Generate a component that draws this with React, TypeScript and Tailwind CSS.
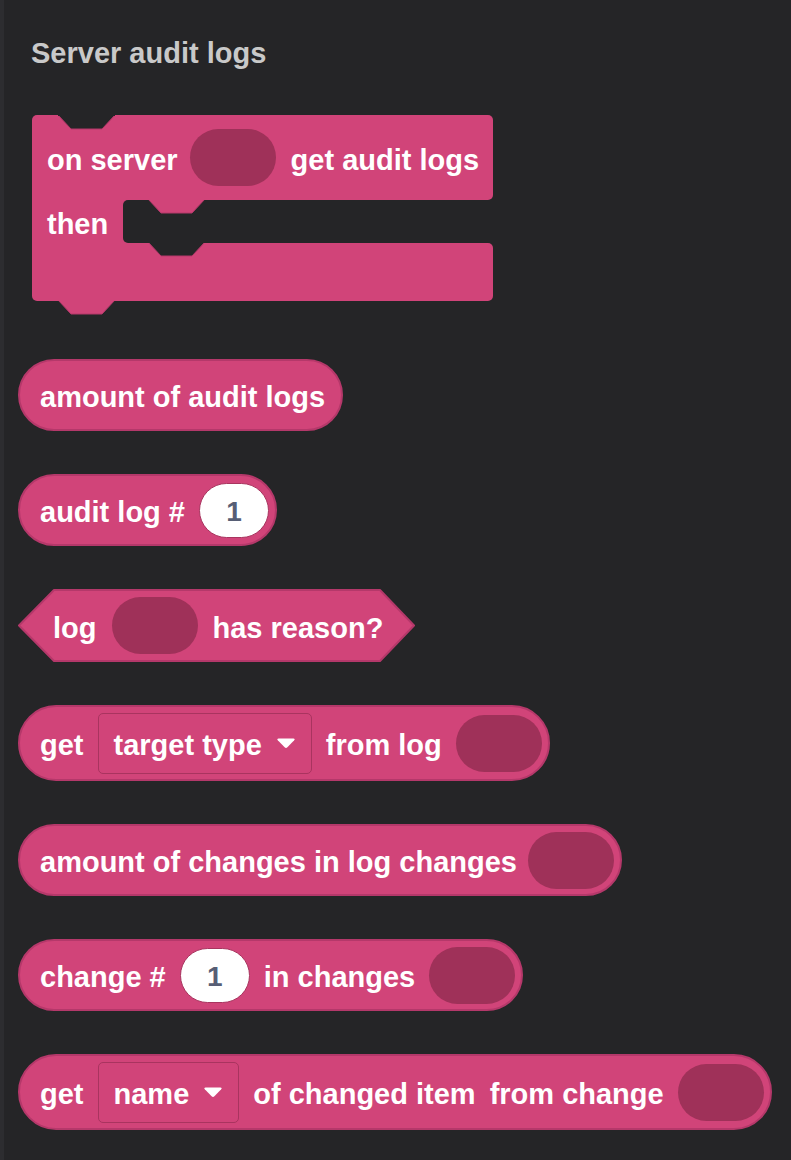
import type { ReactNode } from 'react'

const font = { fontFamily: '"Liberation Sans", Helvetica, Arial, sans-serif' }

// block text sits a few px below the box centre, as in the editor
function Label({ children }: { children: ReactNode }) {
  return <span className="pt-[6px] whitespace-nowrap">{children}</span>
}

function Slot() {
  return <div className="h-[57px] w-[86px] shrink-0 rounded-full bg-[#9f3159]" />
}

function NumberField({ value }: { value: string }) {
  return (
    <div className="flex h-[55px] w-[70px] shrink-0 items-center justify-center rounded-full border border-[#a8355f] bg-white pt-[3px] text-[28px] font-bold text-[#575e75]">
      {value}
    </div>
  )
}

function Dropdown({ label }: { label: string }) {
  return (
    <div className="flex h-[61px] shrink-0 items-center gap-[14px] rounded-[5px] border border-[#a9345f] pl-[15px] pr-[15px]">
      <Label>{label}</Label>
      <svg width="20" height="12" viewBox="0 0 20 12">
        <path d="M2.5 1.5 H17.5 Q19.5 1.5 18.2 3.3 L11.4 10.3 Q10 11.6 8.6 10.3 L1.8 3.3 Q0.5 1.5 2.5 1.5 Z" fill="#ffffff" />
      </svg>
    </div>
  )
}

function Reporter({ children, tall, end }: { children: ReactNode; tall?: boolean; end?: 'slot' | 'text' | 'field' }) {
  const pr = end === 'text' ? 'pr-[16px]' : 'pr-[6px]'
  return (
    <div
      className={`flex w-fit items-center gap-[14px] rounded-full border-2 border-[#b5386a] bg-[#d14479] pl-[20px] ${pr} ${tall ? 'h-[76px]' : 'h-[72px]'}`}
    >
      {children}
    </div>
  )
}

function Notch({ fill, className }: { fill: string; className: string }) {
  return (
    <svg className={`absolute ${className}`} width="57" height="15" viewBox="0 0 57 15">
      <polygon points="0,0 13,14 44,14 57,0" fill={fill} stroke="#b5386a" strokeWidth="1" />
      <rect x="0" y="0" width="57" height="1" fill={fill} />
    </svg>
  )
}

function HatBlock() {
  return (
    <div className="relative ml-[14px] w-[461px]">
      {/* top arm */}
      <div className="relative flex h-[85px] items-center rounded-t-[5px] rounded-br-[5px] bg-[#d14479] pl-[15px]">
        <Notch fill="#252527" className="left-[26px] top-0" />
        <Label>on server</Label>
        <div className="ml-[12px] mr-[15px]">
          <Slot />
        </div>
        <Label>get audit logs</Label>
      </div>
      {/* mouth */}
      <div className="flex h-[43px] bg-[#d14479]">
        <div className="flex w-[91px] items-center pl-[15px]">
          <Label>then</Label>
        </div>
        <div className="relative flex-1 rounded-l-[5px] bg-[#252527]">
          <Notch fill="#d14479" className="left-[25px] -top-[1px]" />
        </div>
      </div>
      {/* bottom arm */}
      <div className="relative h-[58px] rounded-b-[5px] rounded-tr-[5px] bg-[#d14479]">
        <Notch fill="#252527" className="left-[116px] -top-[1px]" />
      </div>
      <Notch fill="#d14479" className="-bottom-[14px] left-[26px]" />
    </div>
  )
}

export default function App() {
  return (
    <div
      className="min-h-screen w-full border-l-4 border-[#2d2d30] bg-[#252527] pb-[30px] text-[29px] font-bold text-white"
      style={font}
    >
      <div className="pl-[14px]">
        <h2 className="ml-[13px] pt-[39px] text-[29px] leading-[29px] font-bold text-[#c9c9c9]">Server audit logs</h2>

        <div className="mt-[47px]">
          <HatBlock />
        </div>

        <div className="mt-[58px] flex flex-col gap-[43px]">
          <Reporter end="text">
            <Label>amount of audit logs</Label>
          </Reporter>

          <Reporter end="field">
            <Label>audit log #</Label>
            <NumberField value="1" />
          </Reporter>

          {/* boolean block */}
          <div className="relative flex h-[73px] w-[397px] items-center">
            <svg className="absolute inset-0" width="397" height="73" viewBox="0 0 397 73">
              <polygon
                points="1,36.5 36,1 362,1 396,36.5 362,72 36,72"
                fill="#d14479"
                stroke="#b5386a"
                strokeWidth="2"
                strokeLinejoin="round"
              />
            </svg>
            <div className="relative flex items-center pl-[35px]">
              <Label>log</Label>
              <div className="ml-[15px] mr-[15px]">
                <Slot />
              </div>
              <Label>has reason?</Label>
            </div>
          </div>

          <Reporter tall end="slot">
            <Label>get</Label>
            <Dropdown label="target type" />
            <Label>from log</Label>
            <Slot />
          </Reporter>

          <div className="flex h-[72px] w-fit items-center gap-[11px] rounded-full border-2 border-[#b5386a] bg-[#d14479] pl-[20px] pr-[6px]">
            <Label>amount of changes in log changes</Label>
            <Slot />
          </div>

          <Reporter end="slot">
            <Label>change #</Label>
            <NumberField value="1" />
            <Label>in changes</Label>
            <Slot />
          </Reporter>

          <Reporter tall end="slot">
            <Label>get</Label>
            <Dropdown label="name" />
            <Label>of changed item</Label>
            <Label>from change</Label>
            <Slot />
          </Reporter>
        </div>
      </div>
    </div>
  )
}
